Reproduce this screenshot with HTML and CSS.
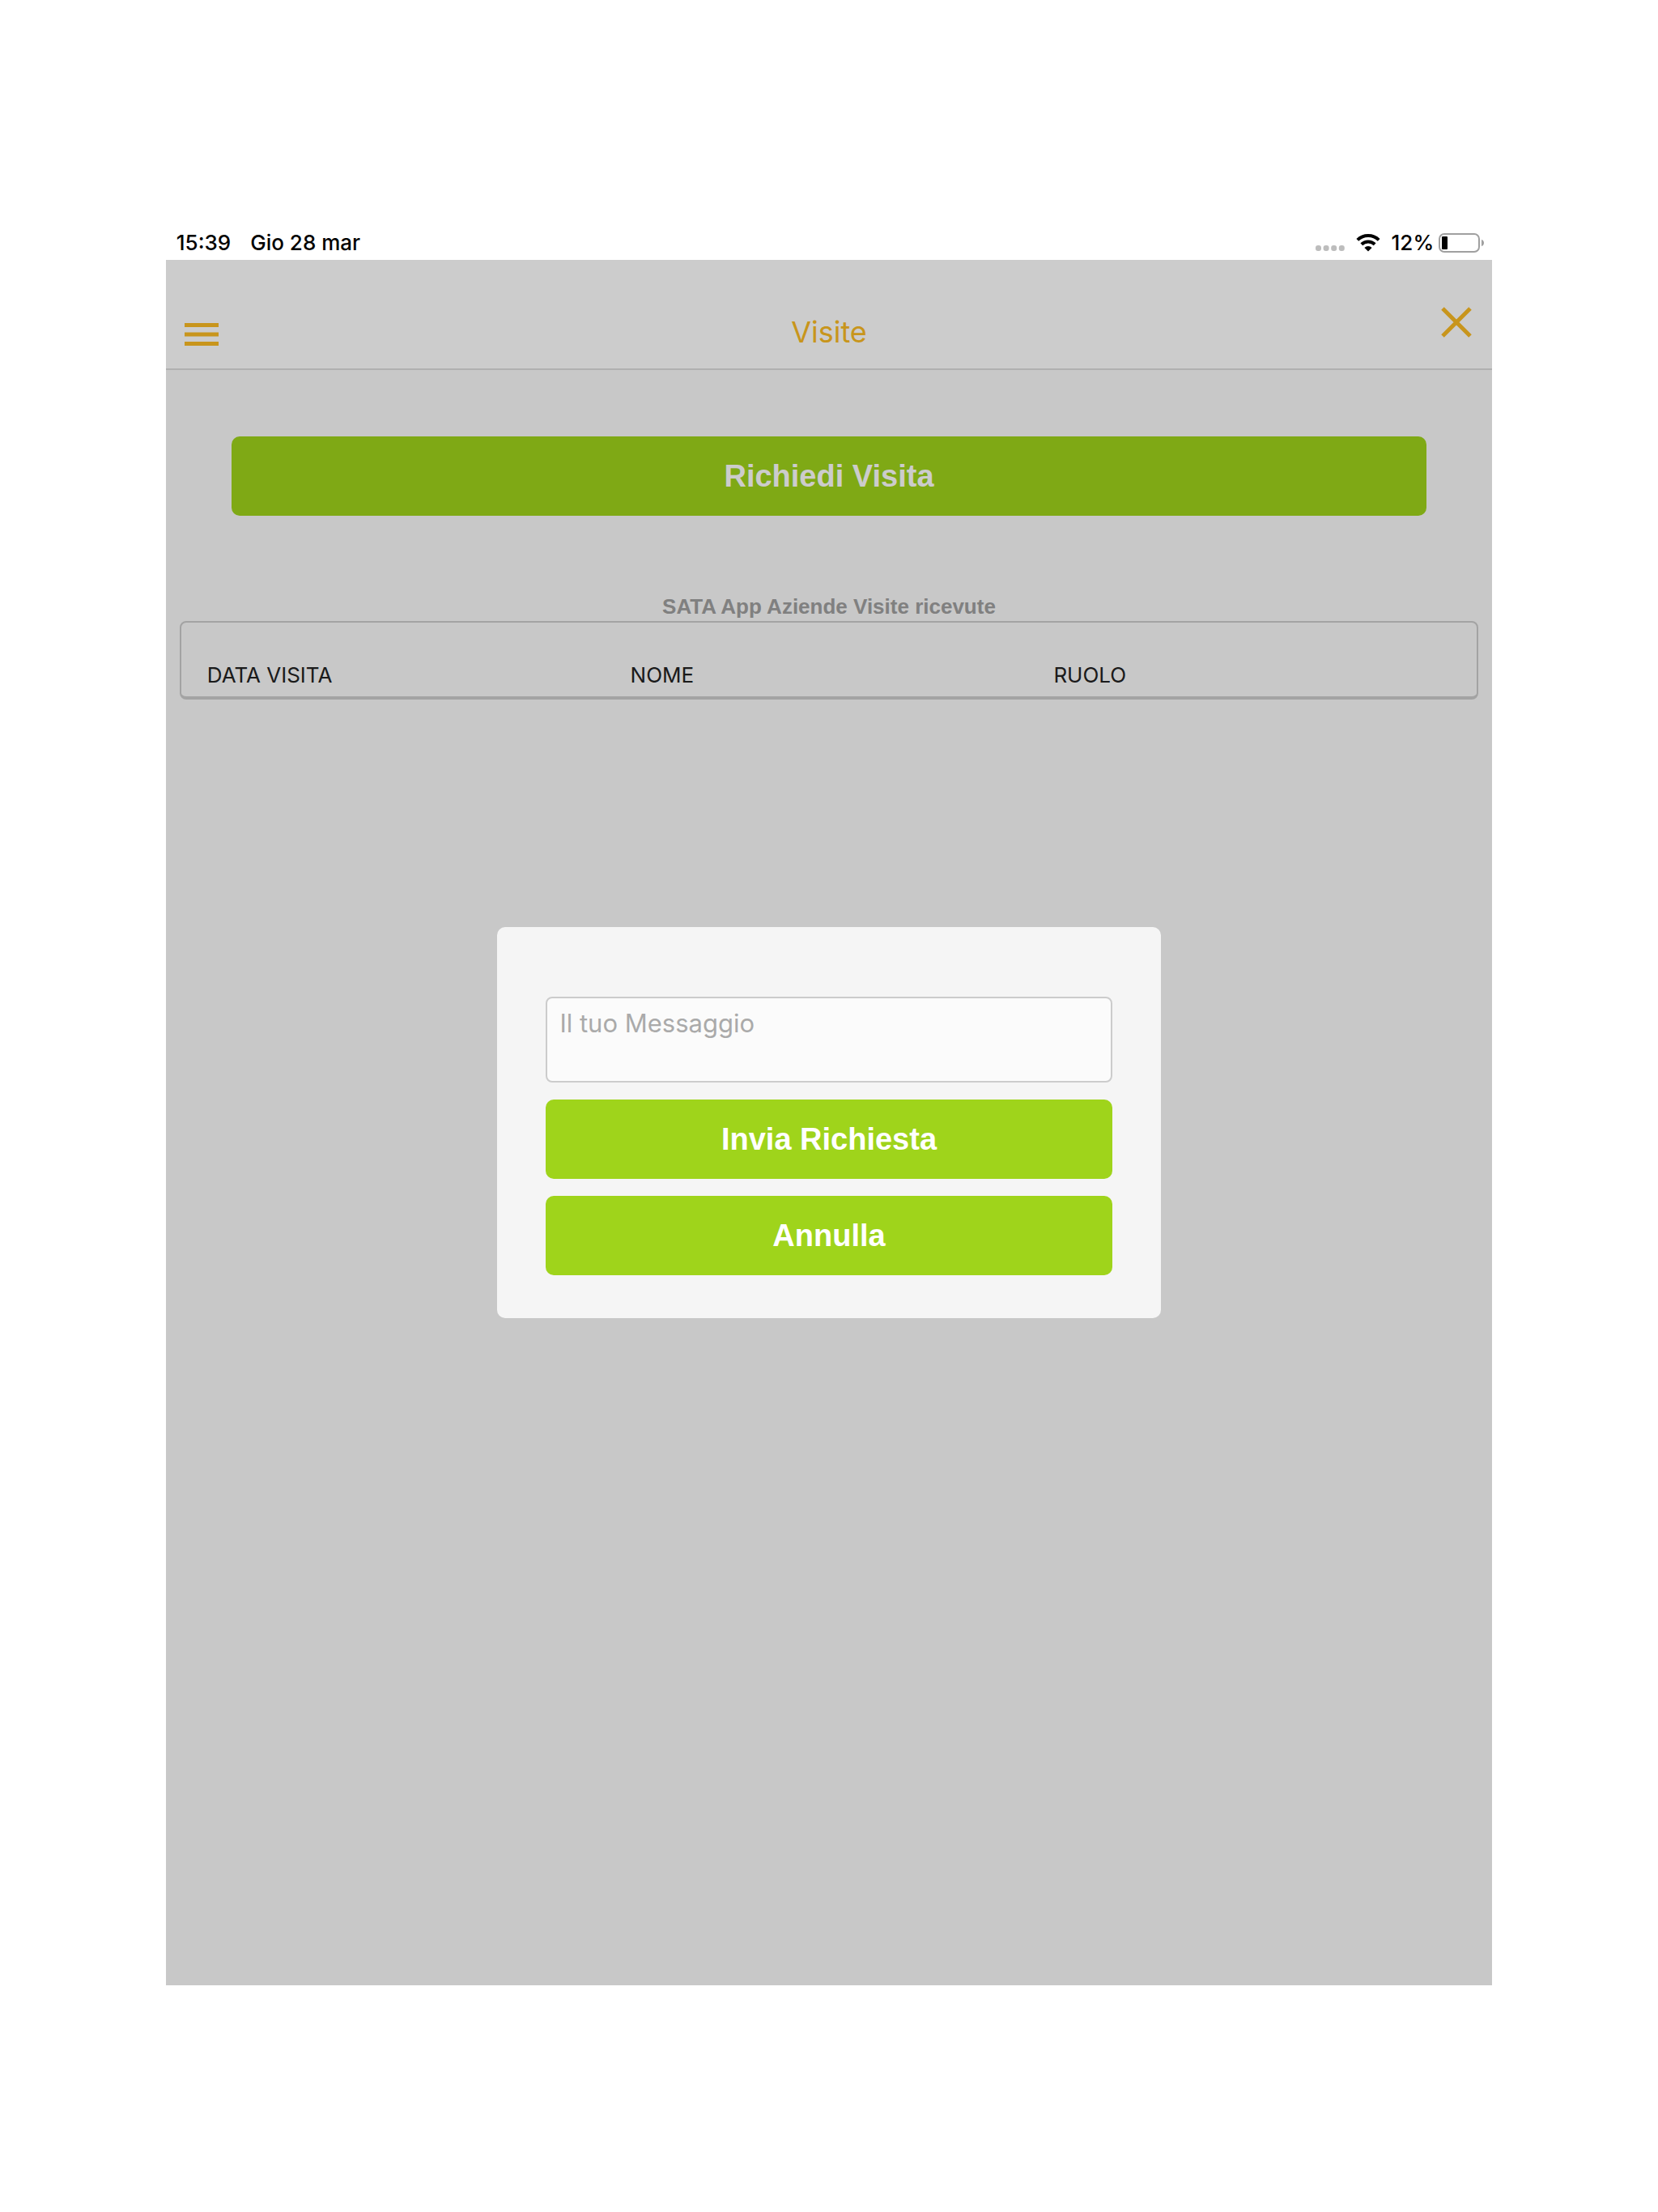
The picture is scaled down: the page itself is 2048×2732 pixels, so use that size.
FILE: index.html
```html
<!DOCTYPE html>
<html lang="it">

<head>
    <meta charset="utf-8">
    <title>Visite</title>
    <meta name="viewport" content="width=device-width, initial-scale=1.0">
    <link rel="stylesheet" href="styles.css">
</head>

<body>
    <div class="statusBar">
        <span>15:39</span>
        <span>Gio 28 mar</span>
        <div class="statusRight">
            <svg class="signal" width="36" height="24" viewBox="0 0 36 24">
                <rect x="0" y="15" width="7" height="7" rx="3" />
                <rect x="9.6" y="15" width="7" height="7" rx="3" />
                <rect x="19.2" y="15" width="7" height="7" rx="3" />
                <rect x="28.8" y="15" width="7" height="7" rx="3" />
            </svg>
            <svg class="wifi" width="30" height="24" viewBox="0 0 30 24">
                <path d="M1.8 8.4a19 19 0 0 1 26.4 0" />
                <path d="M6.8 13.8a11.8 11.8 0 0 1 16.4 0" />
                <path class="wifiDot" d="M15 22.5l-4.6-4.6a6.6 6.6 0 0 1 9.2 0z" />
            </svg>
            <span>12%</span>
            <svg class="battery" width="58" height="24" viewBox="0 0 58 24">
                <rect class="batteryBody" x="1" y="1" width="49" height="22" rx="6" />
                <rect x="4" y="4" width="7" height="16" rx="1" />
                <path class="batteryTip" d="M53 8c4 1 4 7 0 8z" />
            </svg>
        </div>
    </div>

    <div class="app">
        <header class="topBar">
            <button class="iconButton" type="button" aria-label="Menu">
                <svg width="42" height="28" viewBox="0 0 42 28">
                    <path d="M0 2.5h42M0 14h42M0 25.5h42" />
                </svg>
            </button>
            <h1>Visite</h1>
            <button class="iconButton close" type="button" aria-label="Chiudi">
                <svg width="38" height="38" viewBox="0 0 38 38">
                    <path d="M2 2l34 34M36 2L2 36" />
                </svg>
            </button>
        </header>

        <main>
            <button class="btn request" type="button">Richiedi Visita</button>
            <table class="visits">
                <caption>SATA App Aziende Visite ricevute</caption>
                <thead>
                    <tr>
                        <th scope="col">DATA VISITA</th>
                        <th scope="col">NOME</th>
                        <th scope="col">RUOLO</th>
                    </tr>
                </thead>
            </table>
        </main>

        <!-- request popup -->
        <div class="overlay">
            <form class="modal" role="dialog" aria-label="Richiedi Visita">
                <textarea class="message" aria-label="Il tuo Messaggio" placeholder="Il tuo Messaggio"></textarea>
                <button class="btn" type="button">Invia Richiesta</button>
                <button class="btn" type="button">Annulla</button>
            </form>
        </div>
    </div>
</body>

</html>
```

FILE: styles.css
```css
* {
    box-sizing: border-box;
}

body {
    margin: 0;
    padding: 280px 10%;
    min-height: 100vh;
    display: flex;
    flex-direction: column;
    background-color: white;
    font-family: Inter, "Liberation Sans", sans-serif;
    font-size: 26px;
}

svg {
    display: block;
}

/* status bar */
.statusBar {
    display: flex;
    align-items: center;
    gap: 24px;
    height: 41px;
    padding: 0 8px 2px 13px;
    font-weight: 500;
}

.statusRight {
    margin-left: auto;
    display: flex;
    align-items: center;
    gap: 14px;
}

.signal {
    fill: #bdbdbd;
}

.wifi {
    fill: none;
    stroke: black;
    stroke-width: 4;
}

.wifi .wifiDot {
    fill: black;
    stroke: none;
}

.battery {
    margin-left: -8px;
}

.batteryBody {
    fill: none;
    stroke: #a0a0a0;
    stroke-width: 2;
}

.batteryTip {
    fill: #a0a0a0;
}

/* app */
.app {
    position: relative;
    flex: 1;
    display: flex;
    flex-direction: column;
    background-color: #fafafa;
}

.topBar {
    display: flex;
    justify-content: space-between;
    align-items: flex-end;
    padding: 56px 23px 24px;
    border-bottom: 2px solid #dcdcdc;
    background-color: white;
}

.topBar h1 {
    margin: 0;
    padding-top: 12px;
    font-size: 36px;
    font-weight: 400;
    line-height: 42px;
    color: #fabb23;
}

.iconButton {
    width: 42px;
    padding: 4px 0;
    border: none;
    background: none;
    cursor: pointer;
}

.iconButton svg {
    margin: 0 auto;
}

.iconButton path {
    fill: none;
    stroke: #fabb23;
    stroke-width: 5;
}

.close {
    align-self: flex-start;
    padding: 2px 0;
}

main {
    padding: 82px 17px;
}

.btn {
    display: block;
    width: 100%;
    height: 98px;
    border: none;
    border-radius: 10px;
    background-color: #9fd41b;
    color: white;
    font-family: "Liberation Sans", Arial, sans-serif;
    font-size: 38px;
    font-weight: bold;
    cursor: pointer;
}

.request {
    width: 92%;
    margin: 0 auto 94px;
}

.visits {
    width: 100%;
    table-layout: fixed;
    border: 2px solid #cccccc;
    border-bottom-width: 4px;
    border-radius: 8px;
    border-spacing: 0;
    padding: 0 16px;
}

.visits caption {
    font-family: "Liberation Sans", Arial, sans-serif;
    font-weight: bold;
    line-height: 36px;
    color: #a0a0a0;
}

.visits th {
    padding: 49px 0 10px 16px;
    font-size: 26px;
    font-weight: 400;
    line-height: 32px;
    text-align: left;
    color: #222222;
}

/* popup */
.overlay {
    position: absolute;
    inset: 0;
    display: flex;
    justify-content: center;
    align-items: center;
    background-color: rgba(0, 0, 0, 0.2);
}

.modal {
    display: flex;
    flex-direction: column;
    gap: 21px;
    width: 50%;
    padding: 86px 60px 53px;
    border-radius: 10px;
    background-color: #f5f5f5;
}

.message {
    display: block;
    width: 100%;
    height: 106px;
    padding: 12px 15px;
    border: 2px solid #cccccc;
    border-radius: 8px;
    background-color: #fbfbfb;
    font-family: Inter, "Liberation Sans", sans-serif;
    font-size: 31px;
    line-height: 38px;
    resize: none;
}

.message::placeholder {
    color: #aaaaaa;
}
```
